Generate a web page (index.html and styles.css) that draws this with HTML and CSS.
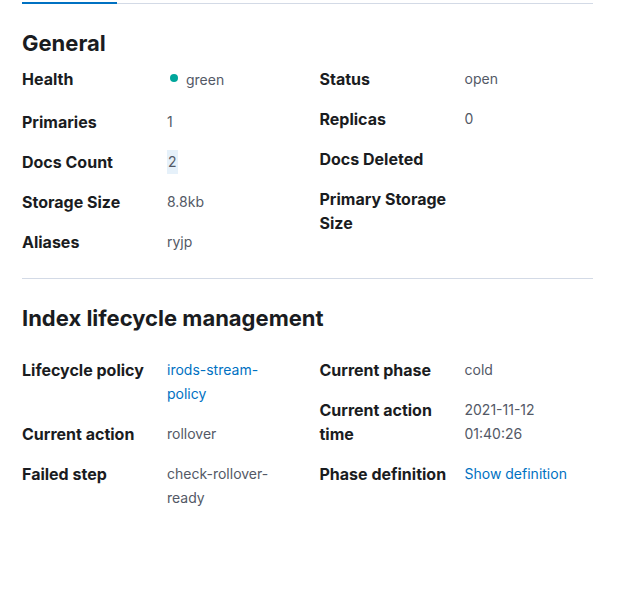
FILE: index.html
```html
<!DOCTYPE html>
<html lang="en">
<head>
<meta charset="utf-8">
<title>Index details</title>
<link rel="stylesheet" href="styles.css">
</head>
<body>
<div class="page">
  <div class="tabs"><div class="tab-active"></div></div>

  <h2 class="title title-general">General</h2>
  <div class="columns">
    <dl class="dlist">
      <dt class="dt">Health</dt>
      <dd class="dd dd-health"><span class="health-dot"></span>green</dd>
      <dt class="dt">Primaries</dt>
      <dd class="dd">1</dd>
      <dt class="dt">Docs Count</dt>
      <dd class="dd"><span class="hl">2</span></dd>
      <dt class="dt">Storage Size</dt>
      <dd class="dd">8.8kb</dd>
      <dt class="dt">Aliases</dt>
      <dd class="dd">ryjp</dd>
    </dl>
    <dl class="dlist">
      <dt class="dt">Status</dt>
      <dd class="dd">open</dd>
      <dt class="dt">Replicas</dt>
      <dd class="dd">0</dd>
      <dt class="dt">Docs Deleted</dt>
      <dd class="dd"></dd>
      <dt class="dt">Primary Storage Size</dt>
      <dd class="dd"></dd>
    </dl>
  </div>

  <hr class="rule">

  <h2 class="title title-ilm">Index lifecycle management</h2>
  <div class="columns">
    <dl class="dlist">
      <dt class="dt">Lifecycle policy</dt>
      <dd class="dd"><a class="link" href="#">irods-stream-policy</a></dd>
      <dt class="dt">Current action</dt>
      <dd class="dd">rollover</dd>
      <dt class="dt">Failed step</dt>
      <dd class="dd">check-rollover-ready</dd>
    </dl>
    <dl class="dlist">
      <dt class="dt">Current phase</dt>
      <dd class="dd">cold</dd>
      <dt class="dt">Current action time</dt>
      <dd class="dd">2021-11-12 01:40:26</dd>
      <dt class="dt">Phase definition</dt>
      <dd class="dd"><a class="link" href="#">Show definition</a></dd>
    </dl>
  </div>
</div>
</body>
</html>
```

FILE: styles.css
```css
html, body {
  margin: 0;
  padding: 0;
  background: #ffffff;
}

body {
  font-family: Inter, "Liberation Sans", sans-serif;
  color: #1a1c21;
}

.page {
  width: 571px;
  padding: 0 24px 0 22px;
}

.tabs {
  display: flex;
  height: 4px;
  box-shadow: inset 0 -1px 0 #d3dae6;
}

.tab-active {
  width: 95px;
  height: 2px;
  border-bottom: 2px solid #0071c2;
}

.title {
  margin: 0;
  font-size: 22px;
  line-height: 28px;
  font-weight: 700;
  color: #1a1c21;
}

.title-general {
  margin-top: 25px;
}

.title-ilm {
  margin-top: 25px;
}

.columns {
  display: grid;
  grid-template-columns: 1fr 1fr;
  column-gap: 24px;
  align-items: start;
}

.title-general + .columns {
  margin-top: 10px;
}

.title-ilm + .columns {
  margin-top: 26px;
}

.dlist {
  margin: 0;
  display: grid;
  grid-template-columns: 137px 1fr;
  column-gap: 8px;
  row-gap: 16px;
  font-size: 14px;
  line-height: 24px;
}

.dt {
  font-size: 16px;
  font-weight: 700;
  color: #1a1c21;
}

.dd {
  margin: 0;
  color: #535966;
}

.dd-health {
  display: flex;
  align-items: center;
  gap: 8px;
  height: 27px;
  margin-top: -1px;
  margin-bottom: 1px;
  align-self: start;
}

.health-dot {
  width: 8px;
  height: 8px;
  border-radius: 50%;
  background: #00a69b;
  margin-left: 3px;
  margin-top: -3px;
}

.hl {
  background: #e6f1fa;
  display: inline-block;
  padding: 0 1px;
}

.link {
  color: #0071c2;
  text-decoration: none;
}

.rule {
  margin: 24px 0 0;
  border: 0;
  height: 1px;
  background: #d3dae6;
}
```
